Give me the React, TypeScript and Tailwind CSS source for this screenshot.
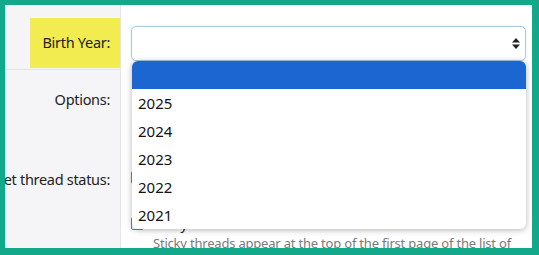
import React from 'react';

const years: string[] = ['', '2025', '2024', '2023', '2022', '2021'];

const font = "font-['Noto_Sans','Liberation_Sans',sans-serif]";

const SortArrows: React.FC = () => (
  <svg width="8" height="11" viewBox="0 0 8 11" className="fill-[#222]">
    <polygon points="4,0 8,4.5 0,4.5" />
    <polygon points="0,6.5 8,6.5 4,11" />
  </svg>
);

const App: React.FC = () => {
  return (
    <div className={`w-[539px] h-[255px] bg-[#12a88a] pt-[5px] pl-[5px] pr-[7px] pb-[7px] ${font}`}>
      <div className="relative w-full h-full bg-white overflow-hidden flex flex-col">
        {/* row: birth year */}
        <div className="flex h-[65px] shrink-0">
          <div className="w-[116px] bg-[#f5f5f7] border-r border-b border-[#e4e4e6] pt-[13px] pl-[25px]">
            <div className="h-[50px] bg-[#f2ec50] flex items-center justify-end pr-[10px] text-[14.5px] tracking-[-0.3px] text-[#222]">
              Birth Year:
            </div>
          </div>
          <div className="flex-1 pl-[10px] pr-[6px] pt-[21px]">
            <div className="h-[35px] border border-[#a9cbe3] rounded-[5px] bg-white flex items-center justify-end pr-[5px] shadow-[0_0_2px_rgba(120,170,220,0.35)]">
              <SortArrows />
            </div>
          </div>
        </div>

        {/* row: options */}
        <div className="flex h-[75px] shrink-0">
          <div className="w-[116px] bg-[#f5f5f7] border-r border-[#e4e4e6] flex justify-end pr-[10px] pt-[19px] text-[14.5px] tracking-[-0.3px] text-[#222]">
            Options:
          </div>
          <div className="flex-1" />
        </div>

        {/* row: thread status */}
        <div className="flex flex-1">
          <div className="w-[116px] bg-[#f5f5f7] border-r border-[#e4e4e6] flex justify-end pr-[10px] pt-[24px] text-[14.5px] tracking-[-0.3px] text-[#222] whitespace-nowrap overflow-hidden">
            Set thread status:
          </div>
          <div className="flex-1 pl-[10px] pt-[25px] flex flex-col">
            <div className="flex items-center gap-[6px] h-[15px]">
              <span className="w-[13px] h-[13px] border border-[#4b8fd6] rounded-[2px] bg-white" />
              <span className="text-[14px] text-[#222]">Lock thread</span>
            </div>
            <div className="flex items-center gap-[6px] h-[15px] mt-[31px]">
              <span className="w-[13px] h-[13px] border border-[#4b8fd6] rounded-[2px] bg-white" />
              <span className="text-[14px] text-[#222]">Sticky thread</span>
            </div>
            <div className="pl-[22px] mt-[4px] text-[13px] tracking-[-0.2px] text-[#7a7a7a] whitespace-nowrap leading-[16px]">
              Sticky threads appear at the top of the first page of the list of
            </div>
          </div>
        </div>

        {/* open dropdown list */}
        <ul className="absolute left-[127px] top-[56px] w-[394px] h-[168px] bg-white rounded-[6px] shadow-[0_1px_6px_rgba(0,0,0,0.3)] overflow-hidden">
          {years.map((y, i) => (
            <li
              key={i}
              className={`h-[28px] flex items-center pl-[6px] text-[15px] ${i === 0 ? 'bg-[#1b66d0] text-white' : 'text-[#111]'}`}
            >
              {y}
            </li>
          ))}
        </ul>
      </div>
    </div>
  );
};

export default App;
